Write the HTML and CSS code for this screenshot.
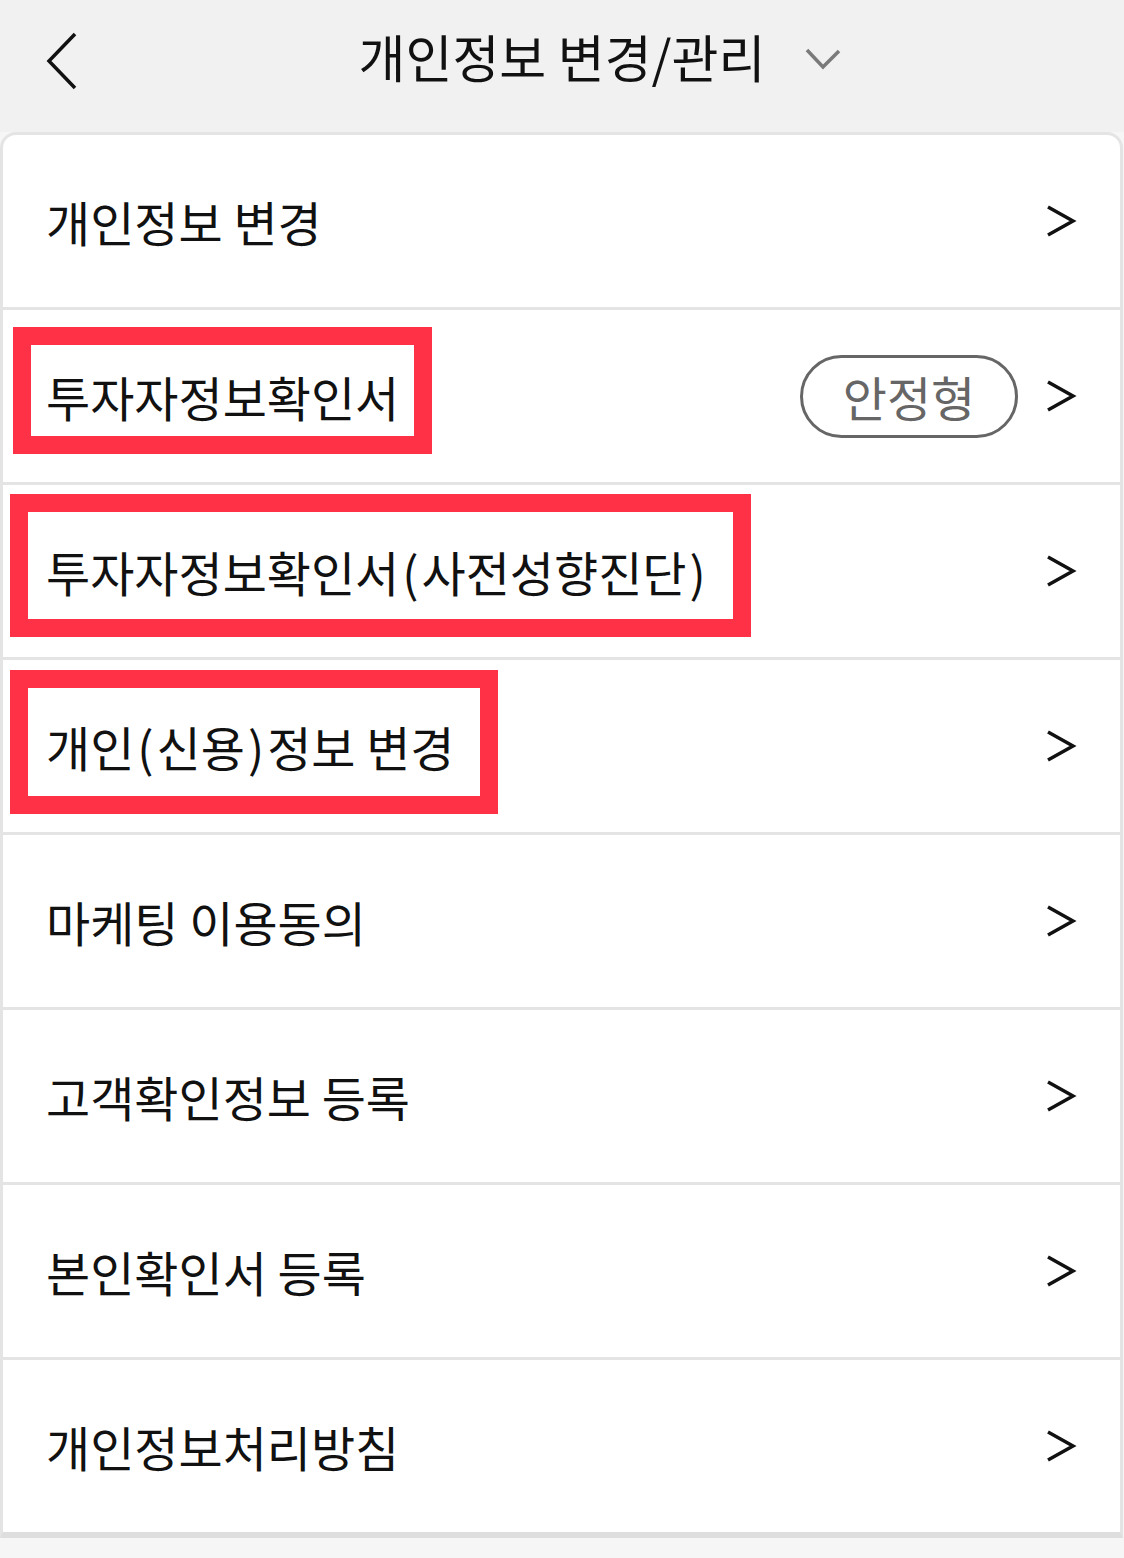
FILE: index.html
```html
<!DOCTYPE html>
<html>
  <head>
    <title>
      개인정보 변경/관리
    </title>
    <link rel="stylesheet" href="styles.css">
</head>
  <body>
    <div class="topbar">
      <div class="topbar-left">
        <svg class="back-icon" width="34" height="60" viewBox="0 0 34 60">
          <polyline points="30,3 4,30 30,57" />
        </svg>
      </div>
      <div class="topbar-title">개인정보 변경/관리</div>
      <div class="topbar-right">
        <svg class="down-icon" width="38" height="24" viewBox="0 0 38 24">
          <polyline points="2,3 18,20 34,4" />
        </svg>
      </div>
    </div>

    <ul class="menu-list">
      <li class="menu-item">
        <span class="menu-label">개인정보 변경</span>
        <svg class="arrow-icon" width="32" height="34" viewBox="0 0 32 34"><polyline points="3,3 28,17 3,31" /></svg>
      </li>
      <li class="menu-item">
        <span class="menu-label hl hl-one">투자자정보확인서</span>
        <span class="badge">안정형</span>
        <svg class="arrow-icon" width="32" height="34" viewBox="0 0 32 34"><polyline points="3,3 28,17 3,31" /></svg>
      </li>
      <li class="menu-item">
        <span class="menu-label hl hl-two">투자자정보확인서<span class="paren">(</span>사전성향진단<span class="paren">)</span></span>
        <svg class="arrow-icon" width="32" height="34" viewBox="0 0 32 34"><polyline points="3,3 28,17 3,31" /></svg>
      </li>
      <li class="menu-item">
        <span class="menu-label hl hl-three">개인<span class="paren">(</span>신용<span class="paren">)</span>정보 변경</span>
        <svg class="arrow-icon" width="32" height="34" viewBox="0 0 32 34"><polyline points="3,3 28,17 3,31" /></svg>
      </li>
      <li class="menu-item">
        <span class="menu-label">마케팅 이용동의</span>
        <svg class="arrow-icon" width="32" height="34" viewBox="0 0 32 34"><polyline points="3,3 28,17 3,31" /></svg>
      </li>
      <li class="menu-item">
        <span class="menu-label">고객확인정보 등록</span>
        <svg class="arrow-icon" width="32" height="34" viewBox="0 0 32 34"><polyline points="3,3 28,17 3,31" /></svg>
      </li>
      <li class="menu-item">
        <span class="menu-label">본인확인서 등록</span>
        <svg class="arrow-icon" width="32" height="34" viewBox="0 0 32 34"><polyline points="3,3 28,17 3,31" /></svg>
      </li>
      <li class="menu-item">
        <span class="menu-label">개인정보처리방침</span>
        <svg class="arrow-icon" width="32" height="34" viewBox="0 0 32 34"><polyline points="3,3 28,17 3,31" /></svg>
      </li>
    </ul>
  </body>
</html>
```

FILE: styles.css
```css
body {
  margin: 0;
  background-color: #f6f6f6;
  font-family: "Noto Sans CJK KR", "Noto Sans", sans-serif;
  color: #111;
}

.topbar {
  height: 132px;
  background-color: #f1f1f1;
  display: grid;
  grid-template-columns: 1fr auto 1fr;
  align-items: center;
}

.topbar-left {
  padding-left: 45px;
  padding-bottom: 6px;
}

.topbar-title {
  font-size: 51px;
  line-height: 1;
  color: #111;
  padding-bottom: 20px;
}

.topbar-right {
  padding-left: 40px;
  padding-bottom: 10px;
}

.back-icon polyline {
  fill: none;
  stroke: #111;
  stroke-width: 3.5;
}

.down-icon polyline {
  fill: none;
  stroke: #7a7a7a;
  stroke-width: 3.5;
}

.menu-list {
  list-style: none;
  margin: 0 1px 0 0;
  padding: 0;
  background-color: #fff;
  border: 3px solid #e4e4e4;
  border-bottom: 6px solid #dedede;
  border-radius: 16px 16px 0 0;
}

.menu-item {
  height: 172px;
  display: flex;
  align-items: center;
  padding: 0 43px 0 43px;
  border-bottom: 3px solid #e4e4e4;
}

.menu-item:last-child {
  border-bottom: none;
}

.menu-label {
  flex: 1;
  font-size: 48px;
  line-height: 1;
}

.paren {
  margin: 0 3px;
}

.arrow-icon polyline {
  fill: none;
  stroke: #111;
  stroke-width: 3.5;
}

.badge {
  box-sizing: border-box;
  width: 218px;
  height: 83px;
  border: 3px solid #666;
  border-radius: 42px;
  color: #666;
  font-size: 48px;
  line-height: 1;
  display: flex;
  align-items: center;
  justify-content: center;
  margin-right: 27px;
}

/* red annotation boxes */
.hl {
  flex: none;
  position: relative;
  margin-right: auto;
}

.hl::after {
  content: "";
  position: absolute;
  border: 18px solid #fe3146;
}

.hl-one::after {
  left: -33px;
  right: -33px;
  top: -45px;
  bottom: -34px;
}

.hl-two::after {
  left: -36px;
  right: -42px;
  top: -53px;
  bottom: -42px;
}

.hl-three::after {
  left: -36px;
  right: -43px;
  top: -52px;
  bottom: -44px;
}
```
